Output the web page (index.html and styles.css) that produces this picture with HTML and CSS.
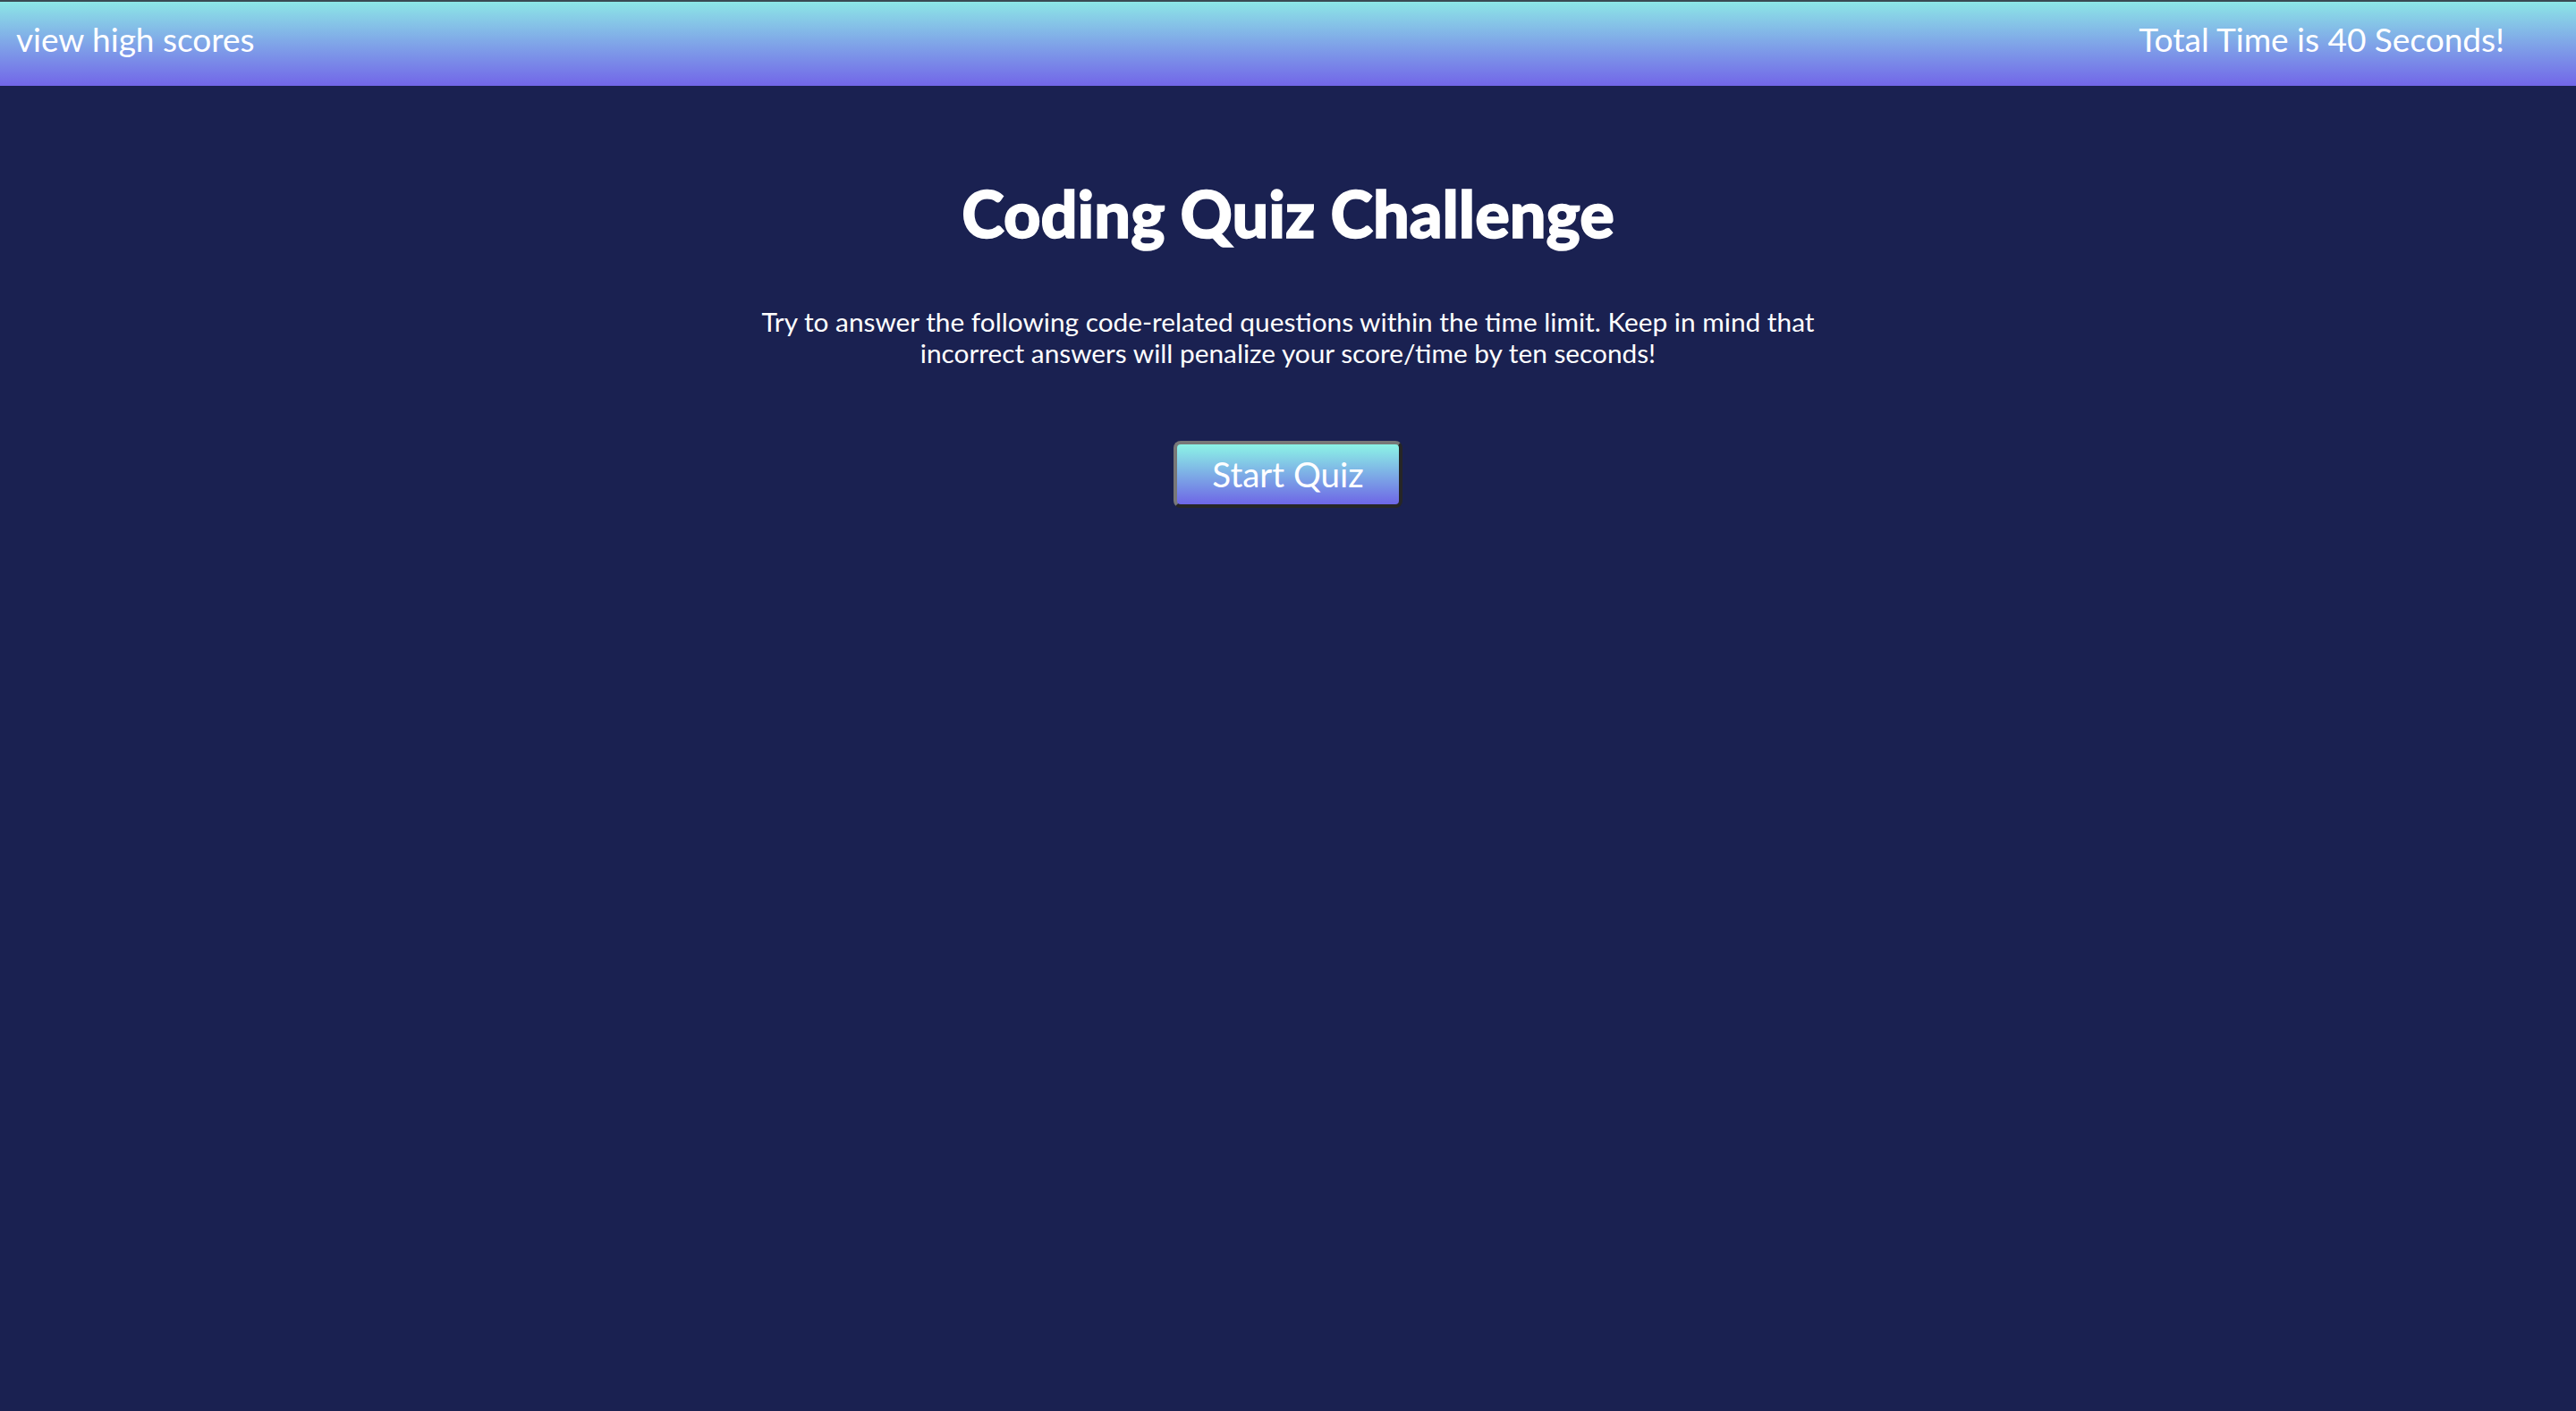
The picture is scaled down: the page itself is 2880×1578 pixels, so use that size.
FILE: index.html
```html
<!DOCTYPE html>
<html lang="en">
<head>
<meta charset="utf-8">
<title>Coding Quiz Challenge</title>
<link rel="stylesheet" href="styles.css">
</head>
<body>
<header class="topbar">
  <a class="topbar-link" href="#">view high scores</a>
  <span class="topbar-timer">Total Time is 40 Seconds!</span>
</header>
<main class="intro">
  <h1 class="intro-title">Coding Quiz Challenge</h1>
  <p class="intro-text">Try to answer the following code-related questions within the time limit. Keep in mind that incorrect answers will penalize your score/time by ten seconds!</p>
  <button class="start-btn" type="button">Start Quiz</button>
</main>
</body>
</html>
```

FILE: styles.css
```css
html, body {
  margin: 0;
  padding: 0;
}

body {
  background: #1a2151;
  color: #ffffff;
  font-family: "Lato", "Noto Sans", sans-serif;
  min-height: 1578px;
}

.topbar {
  display: flex;
  justify-content: space-between;
  align-items: flex-start;
  height: 94px;
  box-sizing: content-box;
  border-top: 2px solid #3a4a52;
  padding: 0 80px 0 18px;
  background: linear-gradient(to bottom, #8ce6e6 0%, #7e9ee8 55%, #7266e8 100%);
}

.topbar-link,
.topbar-timer {
  color: #ffffff;
  text-decoration: none;
  font-size: 37px;
  line-height: 43px;
  padding-top: 20px;
}

.intro {
  display: flex;
  flex-direction: column;
  align-items: center;
  text-align: center;
}

.intro-title {
  margin: 99px 0 0;
  font-size: 72px;
  font-weight: 900;
  line-height: 86px;
  -webkit-text-stroke: 1.5px #ffffff;
}

.intro-text {
  margin: 61px 0 0;
  width: 1200px;
  font-size: 29.8px;
  line-height: 35px;
}

.start-btn {
  margin-top: 81px;
  padding: 10px 39px 11px;
  border: 4px solid;
  border-color: #787878 #262626 #262626 #787878;
  border-radius: 8px;
  background: linear-gradient(to bottom, #8cf4e6 0%, #6e66e6 100%);
  color: #ffffff;
  font-family: "Lato", "Noto Sans", sans-serif;
  font-size: 38.5px;
  line-height: 46px;
  cursor: pointer;
}
```
